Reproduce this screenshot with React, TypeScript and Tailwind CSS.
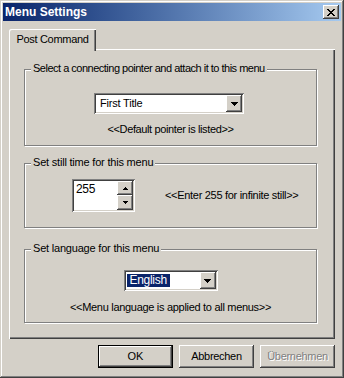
import React from "react";

const raised =
  "shadow-[inset_-1px_-1px_#404040,inset_1px_1px_#d4d0c8,inset_-2px_-2px_#808080,inset_2px_2px_#ffffff]";
const raisedBtn =
  "shadow-[inset_-1px_-1px_#404040,inset_1px_1px_#ffffff,inset_-2px_-2px_#808080,inset_2px_2px_#d4d0c8]";
const sunken =
  "shadow-[inset_1px_1px_#808080,inset_-1px_-1px_#ffffff,inset_2px_2px_#404040,inset_-2px_-2px_#d4d0c8]";

function DownArrow() {
  return (
    <svg width="7" height="4" viewBox="0 0 7 4" shapeRendering="crispEdges">
      <path d="M0 0h7v1H0zM1 1h5v1H1zM2 2h3v1H2zM3 3h1v1H3z" fill="#000" />
    </svg>
  );
}

function UpArrow() {
  return (
    <svg width="5" height="3" viewBox="0 0 5 3" shapeRendering="crispEdges">
      <path d="M2 0h1v1H2zM1 1h3v1H1zM0 2h5v1H0z" fill="#000" />
    </svg>
  );
}

function SmallDownArrow() {
  return (
    <svg width="5" height="3" viewBox="0 0 5 3" shapeRendering="crispEdges">
      <path d="M0 0h5v1H0zM1 1h3v1H1zM2 2h1v1H2z" fill="#000" />
    </svg>
  );
}

function Combo({
  width,
  children,
}: {
  width: string;
  children: React.ReactNode;
}) {
  return (
    <div className={`${width} h-[21px] bg-white p-[2px] flex ${sunken}`}>
      <div className="flex-1 flex items-center min-w-0">{children}</div>
      <div
        className={`w-[16px] h-[17px] bg-[#d4d0c8] flex items-center justify-center ${raisedBtn}`}
      >
        <DownArrow />
      </div>
    </div>
  );
}

function Group({
  label,
  height,
  className,
  labelClass,
  children,
}: {
  label: string;
  height: string;
  className: string;
  labelClass?: string;
  children: React.ReactNode;
}) {
  return (
    <div
      className={`relative w-[293px] ${height} ${className} border border-[#808080] shadow-[inset_1px_1px_#ffffff,1px_1px_#ffffff]`}
    >
      <span
        className={`absolute left-[6px] -top-[8px] px-[2px] bg-[#d4d0c8] leading-[13px] whitespace-nowrap ${
          labelClass ?? "tracking-[-0.25px]"
        }`}
      >
        {label}
      </span>
      {children}
    </div>
  );
}

function Button({
  children,
  isDefault,
  disabled,
}: {
  children: React.ReactNode;
  isDefault?: boolean;
  disabled?: boolean;
}) {
  if (isDefault) {
    return (
      <div className="w-[75px] h-[23px] border border-black">
        <div className="w-full h-full flex items-center justify-center bg-[#d4d0c8] shadow-[inset_-1px_-1px_#404040,inset_1px_1px_#ffffff,inset_-2px_-2px_#808080]">
          {children}
        </div>
      </div>
    );
  }
  return (
    <div
      className={`w-[75px] h-[23px] flex items-center justify-center bg-[#d4d0c8] tracking-[-0.3px] ${raisedBtn} ${
        disabled ? "text-[#808080] [text-shadow:1px_1px_0_#ffffff]" : ""
      }`}
    >
      {children}
    </div>
  );
}

export default function App() {
  return (
    <div
      className={`w-[344px] h-[378px] bg-[#d4d0c8] p-[3px] flex flex-col text-[11px] leading-[13px] text-black ${raised}`}
      style={{ fontFamily: '"Liberation Sans", Arial, sans-serif' }}
    >
      {/* Title bar */}
      <div className="h-[18px] flex items-center justify-between pl-[2px] pr-[2px] bg-gradient-to-r from-[#0a246a] to-[#a6caf0]">
        <span className="text-white font-bold text-[12px] leading-[14px]">
          Menu Settings
        </span>
        <div
          className={`w-[16px] h-[14px] bg-[#d4d0c8] flex items-center justify-center ${raisedBtn}`}
        >
          <svg width="8" height="7" viewBox="0 0 8 7" shapeRendering="crispEdges">
            <path
              d="M0 0h2v1H0zM6 0h2v1H6zM1 1h2v1H1zM5 1h2v1H5zM2 2h4v1H2zM3 3h2v1H3zM2 4h4v1H2zM1 5h2v1H1zM5 5h2v1H5zM0 6h2v1H0zM6 6h2v1H6z"
              fill="#000"
            />
          </svg>
        </div>
      </div>

      {/* Body */}
      <div className="flex-1 flex flex-col px-[6px] pt-[8px]">
        {/* Tab */}
        <div className="relative z-10 -mb-[2px] w-[87px] h-[22px] pb-[2px] bg-[#d4d0c8] rounded-tl-[2px] flex items-center justify-center tracking-[-0.3px] shadow-[inset_1px_1px_#ffffff,inset_-1px_0_#404040,inset_-2px_0_#808080]">
          Post Command
        </div>

        {/* Panel */}
        <div className="w-[326px] h-[290px] bg-[#d4d0c8] pl-[15px] flex flex-col shadow-[inset_1px_1px_#ffffff,inset_-1px_-1px_#404040,inset_-2px_-2px_#808080]">
          <Group
            label="Select a connecting pointer and attach it to this menu"
            height="h-[77px]"
            className="mt-[20px]"
            labelClass="tracking-[-0.5px]"
          >
            <div className="flex flex-col items-center pt-[23px] pr-[3px]">
              <Combo width="w-[150px]">
                <span className="pl-[4px] tracking-[-0.2px]">First Title</span>
              </Combo>
              <div className="mt-[9px] pl-[3px] tracking-[-0.38px]">
                &lt;&lt;Default pointer is listed&gt;&gt;
              </div>
            </div>
          </Group>

          <Group
            label="Set still time for this menu"
            height="h-[65px]"
            className="mt-[17px]"
            labelClass="tracking-[-0.2px]"
          >
            <div className="flex items-center pl-[47px] pt-[15px]">
              <div className={`w-[63px] h-[33px] bg-white p-[2px] flex ${sunken}`}>
                <div className="flex-1 pl-[2px] pt-[1px] text-[12px] leading-[14px] tracking-[-0.3px]">
                  255
                </div>
                <div className="w-[16px] flex flex-col">
                  <div
                    className={`h-[14px] bg-[#d4d0c8] flex items-center justify-center ${raisedBtn}`}
                  >
                    <UpArrow />
                  </div>
                  <div
                    className={`h-[15px] bg-[#d4d0c8] flex items-center justify-center ${raisedBtn}`}
                  >
                    <SmallDownArrow />
                  </div>
                </div>
              </div>
              <div className="ml-[30px] tracking-[-0.3px]">
                &lt;&lt;Enter 255 for infinite still&gt;&gt;
              </div>
            </div>
          </Group>

          <Group
            label="Set language for this menu"
            height="h-[74px]"
            className="mt-[21px]"
            labelClass="tracking-[-0.2px]"
          >
            <div className="flex flex-col items-center pt-[20px]">
              <Combo width="w-[94px]">
                <span className="ml-[1px] px-[3px] bg-[#0a246a] text-white text-[12px] leading-[13px] tracking-[-0.3px]">
                  English
                </span>
              </Combo>
              <div className="mt-[10px] tracking-[-0.3px]">
                &lt;&lt;Menu language is applied to all menus&gt;&gt;
              </div>
            </div>
          </Group>
        </div>

        {/* Buttons */}
        <div className="flex justify-end gap-[6px] mt-[6px]">
          <Button isDefault>OK</Button>
          <Button>Abbrechen</Button>
          <Button disabled>Übernehmen</Button>
        </div>
      </div>
    </div>
  );
}
